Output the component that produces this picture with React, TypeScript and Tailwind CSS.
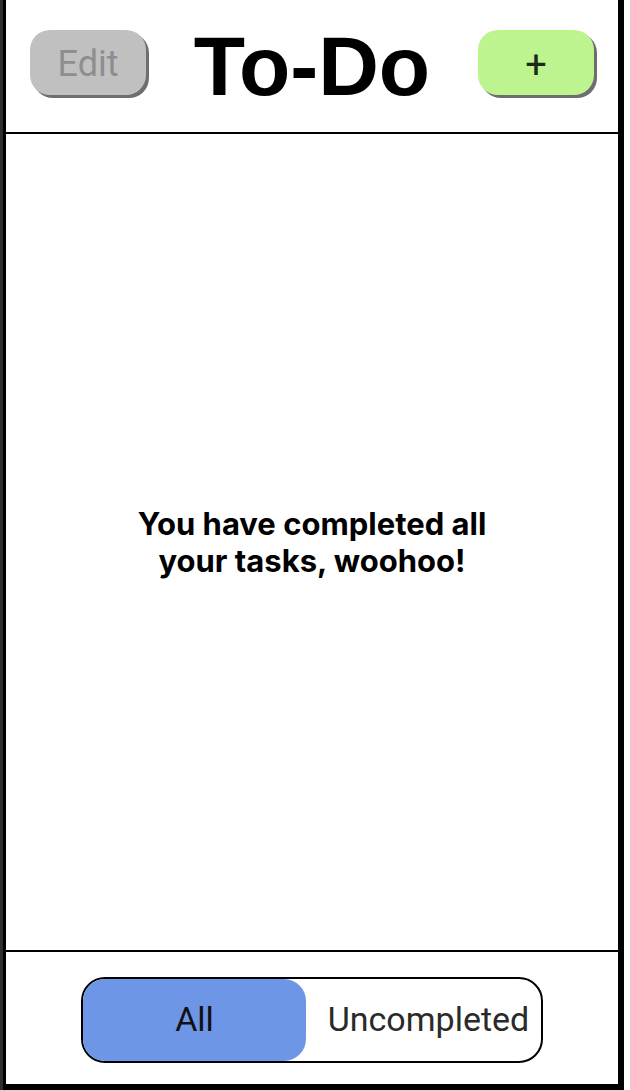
export default function App() {
  return (
    <div className="w-[630px] h-[1090px] bg-white">
      <div className="w-[624px] h-[1090px] border-l-[3px] border-[#2e2e2e]">
        <div className="flex h-full flex-col border-l-[3px] border-r-[6px] border-b-[6px] border-black bg-white">
          <header className="flex h-[134px] shrink-0 items-center justify-between border-b-2 border-black px-6 pb-[8px]">
            <button className="flex h-[65px] w-[116px] items-center justify-center rounded-[20px] bg-[#c0c0c0] pt-[4px] font-['Roboto',sans-serif] text-[36px] text-[#8e8e8e] shadow-[3px_3px_0_#6e6e6e]">
              Edit
            </button>
            <h1 className="pt-[8px] font-['Liberation_Sans',Arial,sans-serif] text-[84px] font-bold leading-none text-black">
              To-Do
            </h1>
            <button className="flex h-[65px] w-[116px] items-center justify-center rounded-[20px] bg-[#bdf490] pt-[6px] font-['Roboto',sans-serif] text-[38px] text-[#1d2a17] shadow-[3px_3px_0_#6e6e6e]">
              +
            </button>
          </header>

          <main className="flex flex-1 items-center justify-center">
            <p className="text-center font-['Inter',sans-serif] text-[31px] font-bold leading-[37px] text-black">
              You have completed all
              <br />
              your tasks, woohoo!
            </p>
          </main>

          <footer className="flex h-[134px] shrink-0 items-center justify-center border-t-2 border-black pt-[3px]">
            <div className="flex h-[86px] w-[462px] rounded-[24px] border-2 border-black font-['Roboto',sans-serif] text-[34px]">
              <div className="flex w-[223px] items-center justify-center rounded-[22px] bg-[#6d96e6] text-[#111]">
                All
              </div>
              <div className="flex flex-1 items-center justify-center pl-[10px] text-[#2a2a2a]">
                Uncompleted
              </div>
            </div>
          </footer>
        </div>
      </div>
    </div>
  );
}
